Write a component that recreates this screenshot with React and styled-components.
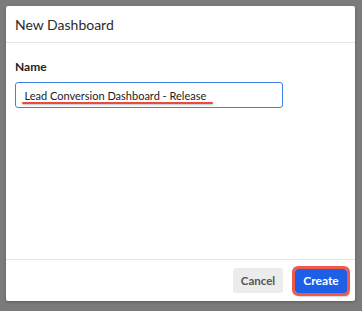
import React from "react";
import styled, { createGlobalStyle } from "styled-components";

const Global = createGlobalStyle`
  html, body { margin: 0; padding: 0; background: #7b7b7b; }
  body { font-family: Lato, "Open Sans", sans-serif; width: 362px; height: 311px; overflow: hidden; }
`;

const Page = styled.div`
  padding: 6px 7px 0 6px;
`;

const Dialog = styled.div`
  width: 349px;
  height: 295px;
  background: #fff;
  border-radius: 2px;
  display: flex;
  flex-direction: column;
  box-shadow: 0 1px 3px rgba(0,0,0,0.25);
`;

const Header = styled.div`
  height: 36px;
  padding: 0 9px;
  display: flex;
  align-items: center;
  border-bottom: 1px solid #e4e4e4;
  font-size: 14px;
  color: #2b2b2b;
`;

const Body = styled.div`
  flex: 1;
  padding: 17px 9px 0;
  display: flex;
  flex-direction: column;
`;

const Label = styled.label`
  font-size: 12px;
  line-height: 14px;
  font-weight: 700;
  color: #222;
  margin-bottom: 8px;
`;

const InputBox = styled.div`
  position: relative;
  width: 268px;
  height: 26px;
  box-sizing: border-box;
  border: 1.5px solid #3b82e6;
  border-radius: 3px;
  display: flex;
  align-items: center;
  padding-left: 8.5px;
  font-size: 11px;
  color: #222;
`;

const Underline = styled.span`
  position: absolute;
  left: 6px;
  top: 19px;
  width: 191px;
  height: 2px;
  border-radius: 1px;
  background: #ec4a3e;
  box-shadow: 0 1px 2px rgba(0,0,0,0.25);
`;

const Footer = styled.div`
  height: 41px;
  border-top: 1px solid #e6e6e6;
  display: flex;
  align-items: center;
  justify-content: flex-end;
  gap: 12px;
  padding-right: 8px;
`;

const Button = styled.button`
  font-family: Lato, sans-serif;
  font-size: ${p => (p.$primary ? "12px" : "11.5px")};
  font-weight: 700;
  height: ${p => (p.$primary ? "24px" : "25px")};
  width: ${p => (p.$primary ? "52px" : "50px")};
  padding: 0;
  border-radius: 3px;
  border: none;
  background: ${p => (p.$primary ? "#1d5fe6" : "#ececec")};
  color: ${p => (p.$primary ? "#fff" : "#555")};
  ${p => p.$primary && `
    outline: 3px solid #f0584a;
    outline-offset: 0;
    box-shadow: 2px 3px 2px rgba(0,0,0,0.55);
  `}
`;

export default function App() {
  return (
    <>
      <Global />
      <Page>
        <Dialog>
          <Header>New Dashboard</Header>
          <Body>
            <Label>Name</Label>
            <InputBox>
              Lead Conversion Dashboard - Release
              <Underline />
            </InputBox>
          </Body>
          <Footer>
            <Button>Cancel</Button>
            <Button $primary>Create</Button>
          </Footer>
        </Dialog>
      </Page>
    </>
  );
}
